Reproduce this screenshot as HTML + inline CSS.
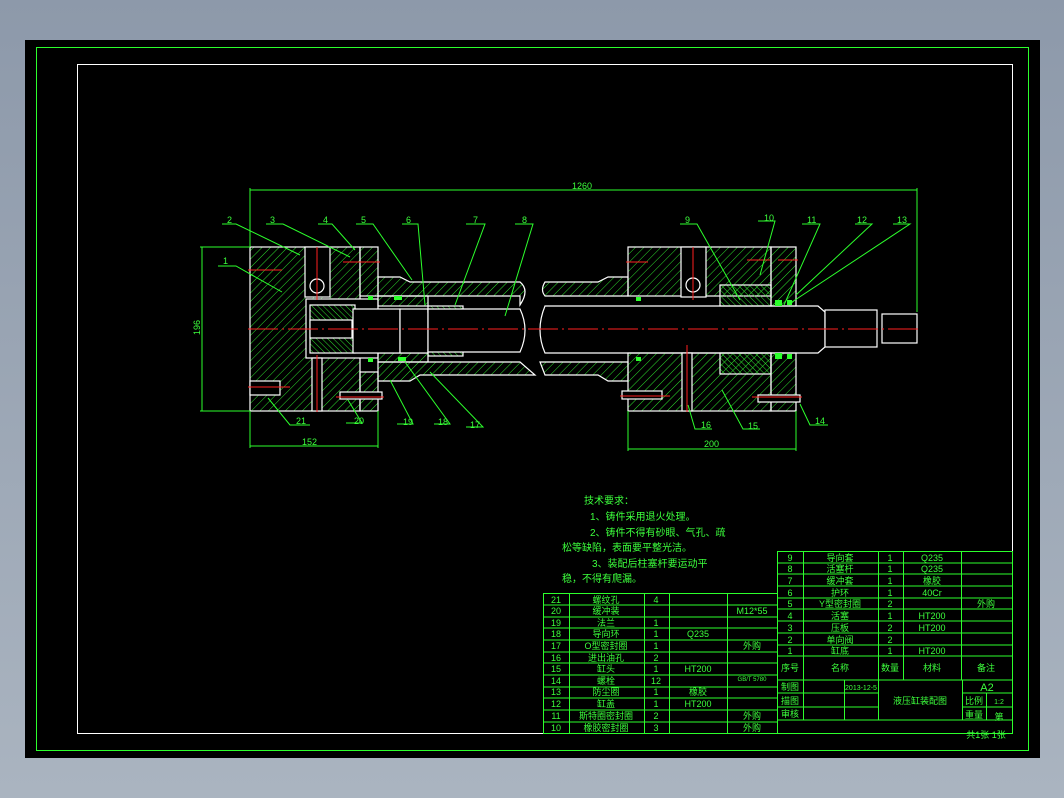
<!DOCTYPE html>
<html><head><meta charset="utf-8"><style>
html,body{margin:0;padding:0;width:1064px;height:798px;overflow:hidden;background:#8c98a8}
body{background:linear-gradient(180deg,#8d99aa 0%,#aab4c0 100%)}
svg{position:absolute;left:0;top:0}
text{font-family:"Liberation Sans","Noto Sans CJK SC",sans-serif;fill:#3cff3c}
</style></head><body>
<svg width="1064" height="798" viewBox="0 0 1064 798" xmlns="http://www.w3.org/2000/svg">
<defs>
<pattern id="h" width="6" height="6" patternUnits="userSpaceOnUse" patternTransform="rotate(45)">
<line x1="0" y1="0" x2="0" y2="6" stroke="#2ee02e" stroke-width="1"/></pattern>
<pattern id="h2" width="4" height="4" patternUnits="userSpaceOnUse" patternTransform="rotate(-45)">
<line x1="0" y1="0" x2="0" y2="4" stroke="#2ee02e" stroke-width="1"/></pattern>
</defs>
<rect x="25" y="40" width="1015" height="718" fill="#000"/>
<rect x="36.5" y="47.5" width="992" height="703" fill="none" stroke="#2cff2c"/>
<rect x="77.5" y="64.5" width="935" height="669" fill="none" stroke="#fff"/>

<g stroke="#fff" stroke-width="1.2">
<rect x="250" y="247" width="110" height="164" fill="url(#h)"/>
<rect x="360" y="247" width="18" height="49" fill="url(#h)"/>
<rect x="360" y="372" width="18" height="39" fill="url(#h)"/>
<rect x="306" y="299" width="72" height="59" fill="#000"/>
<rect x="310" y="305" width="45" height="48" fill="url(#h2)"/>
<rect x="310" y="320" width="42" height="18" fill="#000"/>
<rect x="305" y="247" width="25" height="50" fill="#000"/>
<circle cx="317" cy="286" r="7" fill="#000"/>
<rect x="312" y="358" width="10" height="53" fill="#000"/>
<rect x="250" y="381" width="30" height="14" fill="#000"/>
<rect x="340" y="392" width="42" height="7" fill="#000"/>
<path d="M378 277 L400 277 L410 282 L520 282 Q530 290 520 305 L520 296 L378 296 Z" fill="url(#h)"/>
<path d="M378 362 L520 362 L535 375 L420 375 L410 381 L378 381 Z" fill="url(#h)"/>
<path d="M545 282 L598 282 L608 277 L628 277 L628 296 L545 296 Q540 290 545 282 Z" fill="url(#h)"/>
<path d="M540 362 L628 362 L628 381 L608 381 L598 375 L545 375 Z" fill="url(#h)"/>
<rect x="378" y="296" width="50" height="10" fill="url(#h)"/>
<rect x="378" y="353" width="50" height="9" fill="url(#h)"/>
<rect x="353" y="309" width="47" height="44" fill="#000"/>
<rect x="400" y="309" width="28" height="44" fill="#000"/>
<rect x="428" y="306" width="35" height="6" fill="url(#h2)"/>
<rect x="428" y="350" width="35" height="6" fill="url(#h2)"/>
<path d="M428 309 L520 309 Q530 330 520 352 L428 352 Z" fill="#000"/>
<path d="M545 306 L818 306 L825 312 L825 347 L818 353 L545 353 Q535 330 545 306 Z" fill="#000"/>
<rect x="825" y="310" width="52" height="37" fill="#000"/>
<rect x="882" y="314" width="35" height="29" fill="#000"/>
<rect x="628" y="247" width="143" height="49" fill="url(#h)"/>
<rect x="628" y="353" width="143" height="58" fill="url(#h)"/>
<rect x="771" y="247" width="25" height="59" fill="url(#h)"/>
<rect x="771" y="353" width="25" height="58" fill="url(#h)"/>
<rect x="720" y="285" width="51" height="21" fill="url(#h2)"/>
<rect x="720" y="353" width="51" height="21" fill="url(#h2)"/>
<rect x="681" y="247" width="25" height="50" fill="#000"/>
<circle cx="693" cy="285" r="7" fill="#000"/>
<rect x="682" y="353" width="10" height="58" fill="#000"/>
<rect x="622" y="391" width="40" height="8" fill="#000"/>
<rect x="758" y="395" width="42" height="7" fill="#000"/>
</g>
<g fill="#2cff2c">
<rect x="368" y="296" width="5" height="4"/><rect x="394" y="296" width="8" height="4"/>
<rect x="368" y="358" width="5" height="4"/><rect x="398" y="357" width="8" height="4"/>
<rect x="775" y="300" width="7" height="6"/><rect x="775" y="353" width="7" height="6"/>
<rect x="787" y="300" width="5" height="5"/><rect x="787" y="354" width="5" height="5"/>
<rect x="636" y="297" width="5" height="4"/><rect x="636" y="357" width="5" height="4"/>
</g>
<g stroke="#ff2020" stroke-width="1">
<line x1="248" y1="329" x2="920" y2="329" stroke-dasharray="30 4 2 4"/>
<line x1="248" y1="270" x2="282" y2="270"/><line x1="343" y1="262" x2="380" y2="262"/>
<line x1="317" y1="247" x2="317" y2="300"/><line x1="317" y1="355" x2="317" y2="412"/>
<line x1="248" y1="387" x2="290" y2="387"/><line x1="336" y1="397" x2="384" y2="397"/>
<line x1="626" y1="262" x2="648" y2="262"/><line x1="747" y1="260" x2="770" y2="260"/><line x1="778" y1="260" x2="798" y2="260"/>
<line x1="693" y1="247" x2="693" y2="300"/><line x1="687" y1="345" x2="687" y2="412"/>
<line x1="620" y1="396" x2="670" y2="396"/><line x1="752" y1="397" x2="802" y2="397"/>
</g>
<g stroke="#2cff2c" stroke-width="1" fill="none">
<line x1="250" y1="190" x2="917" y2="190"/><line x1="250" y1="188" x2="250" y2="247"/><line x1="917" y1="188" x2="917" y2="312"/>
<line x1="202" y1="247" x2="202" y2="411"/><line x1="200" y1="247" x2="250" y2="247"/><line x1="200" y1="411" x2="250" y2="411"/>
<line x1="250" y1="411" x2="250" y2="448"/><line x1="378" y1="411" x2="378" y2="448"/><line x1="250" y1="446" x2="378" y2="446"/>
<line x1="628" y1="411" x2="628" y2="451"/><line x1="796" y1="411" x2="796" y2="451"/><line x1="628" y1="449" x2="796" y2="449"/>
<polyline points="222,224 236,224 300,255"/><polyline points="266,224 283,224 350,257"/><polyline points="318,224 332,224 355,250"/>
<polyline points="356,224 373,224 412,280"/><polyline points="402,224 418,224 425,305"/><polyline points="466,224 485,224 455,305"/>
<polyline points="515,224 533,224 505,316"/><polyline points="218,266 236,266 282,292"/>
<polyline points="680,224 697,224 740,300"/><polyline points="758,221 775,221 760,275"/><polyline points="802,224 820,224 784,305"/>
<polyline points="855,224 872,224 796,295"/><polyline points="893,224 910,224 792,302"/>
<polyline points="310,425 290,425 268,398"/><polyline points="346,423 362,423 348,400"/><polyline points="397,424 413,424 390,380"/>
<polyline points="434,424 450,424 405,362"/><polyline points="466,427 483,427 430,372"/>
<polyline points="712,429 695,429 688,405"/><polyline points="760,429 743,429 722,390"/><polyline points="828,425 810,425 800,404"/>
</g>
<g font-size="9">
<text x="572" y="189">1260</text><text x="190" y="333" transform="rotate(-90 196 329)">196</text>
<text x="302" y="445">152</text><text x="704" y="447">200</text>
<text x="227" y="223">2</text><text x="270" y="223">3</text><text x="323" y="223">4</text><text x="361" y="223">5</text>
<text x="406" y="223">6</text><text x="473" y="223">7</text><text x="522" y="223">8</text><text x="223" y="264">1</text>
<text x="685" y="223">9</text><text x="764" y="221">10</text><text x="807" y="223">11</text><text x="857" y="223">12</text><text x="897" y="223">13</text>
<text x="296" y="424">21</text><text x="354" y="424">20</text><text x="403" y="425">19</text><text x="438" y="425">18</text><text x="470" y="428">17</text>
<text x="701" y="428">16</text><text x="748" y="429">15</text><text x="815" y="424">14</text>
</g>
<g font-size="10">
<text x="584" y="504">技术要求：</text>
<text x="590" y="520">1、铸件采用退火处理。</text>
<text x="590" y="536">2、铸件不得有砂眼、气孔、疏</text>
<text x="562" y="551">松等缺陷，表面要平整光洁。</text>
<text x="592" y="567">3、装配后柱塞杆要运动平</text>
<text x="562" y="582">稳，不得有爬漏。</text>
</g>
<g stroke="#2cff2c" stroke-width="1" fill="none">
<rect x="543.5" y="593.5" width="234" height="140"/>
<path d="M569.5 593v140M644.5 593v140M669.5 593v140M727.5 593v140"/>
<path d="M543 605h234M543 617h234M543 628h234M543 640h234M543 652h234M543 663h234M543 675h234M543 687h234M543 698h234M543 710h234M543 722h234"/>
<rect x="777.5" y="551.5" width="235" height="182"/>
<path d="M803.5 551v129M878.5 551v129M903.5 551v129M961.5 551v129"/>
<path d="M777 563h235M777 574h235M777 586h235M777 598h235M777 609h235M777 621h235M777 633h235M777 645h235M777 656h235"/>
<path d="M777 680h235M777 693h101M777 707h101M777 720h235M803.5 680v40M844.5 680v40M878.5 680v40M962.5 680v40M986.5 693v27M962 693h50M962 707h50"/>
</g>
<g font-size="9" text-anchor="middle">
<g>
<text x="556" y="603">21</text><text x="606" y="603">螺纹孔</text><text x="656" y="603">4</text>
<text x="556" y="614">20</text><text x="606" y="614">缓冲装</text><text x="752" y="614">M12*55</text>
<text x="556" y="626">19</text><text x="606" y="626">法兰</text><text x="656" y="626">1</text>
<text x="556" y="637">18</text><text x="606" y="637">导向环</text><text x="656" y="637">1</text><text x="698" y="637">Q235</text>
<text x="556" y="649">17</text><text x="606" y="649">O型密封圈</text><text x="656" y="649">1</text><text x="752" y="649">外购</text>
<text x="556" y="661">16</text><text x="606" y="661">进出油孔</text><text x="656" y="661">2</text>
<text x="556" y="672">15</text><text x="606" y="672">缸头</text><text x="656" y="672">1</text><text x="698" y="672">HT200</text>
<text x="556" y="684">14</text><text x="606" y="684">螺栓</text><text x="656" y="684">12</text><text x="752" y="681" font-size="6">GB/T 5780</text>
<text x="556" y="695">13</text><text x="606" y="695">防尘圈</text><text x="656" y="695">1</text><text x="698" y="695">橡胶</text>
<text x="556" y="707">12</text><text x="606" y="707">缸盖</text><text x="656" y="707">1</text><text x="698" y="707">HT200</text>
<text x="556" y="719">11</text><text x="606" y="719">斯特圈密封圈</text><text x="656" y="719">2</text><text x="752" y="719">外购</text>
<text x="556" y="731">10</text><text x="606" y="731">橡胶密封圈</text><text x="656" y="731">3</text><text x="752" y="731">外购</text>
</g>
<text x="790" y="561">9</text><text x="840" y="561">导向套</text><text x="890" y="561">1</text><text x="932" y="561">Q235</text>
<text x="790" y="572">8</text><text x="840" y="572">活塞杆</text><text x="890" y="572">1</text><text x="932" y="572">Q235</text>
<text x="790" y="584">7</text><text x="840" y="584">缓冲套</text><text x="890" y="584">1</text><text x="932" y="584">橡胶</text>
<text x="790" y="596">6</text><text x="840" y="596">护环</text><text x="890" y="596">1</text><text x="932" y="596">40Cr</text>
<text x="790" y="607">5</text><text x="840" y="607">Y型密封圈</text><text x="890" y="607">2</text><text x="986" y="607">外购</text>
<text x="790" y="619">4</text><text x="840" y="619">活塞</text><text x="890" y="619">1</text><text x="932" y="619">HT200</text>
<text x="790" y="631">3</text><text x="840" y="631">压板</text><text x="890" y="631">2</text><text x="932" y="631">HT200</text>
<text x="790" y="643">2</text><text x="840" y="643">单向阀</text><text x="890" y="643">2</text>
<text x="790" y="654">1</text><text x="840" y="654">缸底</text><text x="890" y="654">1</text><text x="932" y="654">HT200</text>
<text x="790" y="671">序号</text><text x="840" y="671">名称</text><text x="890" y="671">数量</text><text x="932" y="671">材料</text><text x="986" y="671">备注</text>
<text x="790" y="690">制图</text><text x="790" y="704">描图</text><text x="790" y="717">审核</text>
<text x="861" y="690" font-size="7">2013-12-5</text>
<text x="920" y="704">液压缸装配图</text>
<text x="987" y="691" font-size="11">A2</text>
<text x="974" y="704">比例</text><text x="999" y="704" font-size="7">1:2</text>
<text x="974" y="718">重量</text><text x="999" y="720">第</text>
<text x="986" y="738">共1张 1张</text>
</g>
</svg>
</body></html>
